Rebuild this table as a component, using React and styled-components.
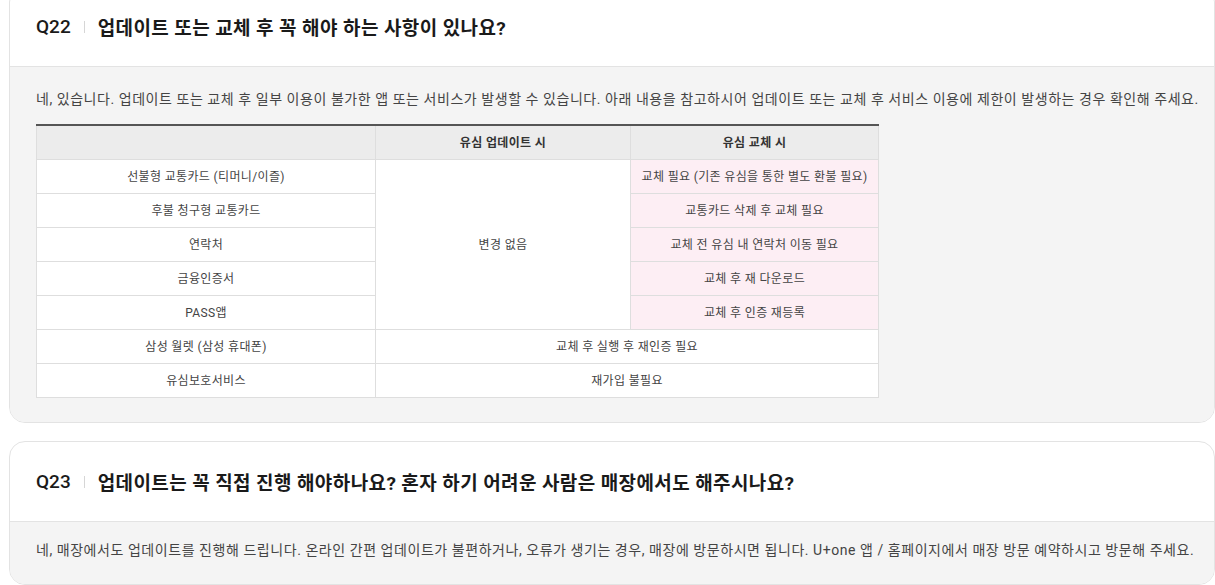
import styled, { createGlobalStyle } from 'styled-components'

const GlobalStyle = createGlobalStyle`
  html, body {
    margin: 0;
    padding: 0;
    background: #fff;
    overflow: hidden;
  }
  body {
    font-family: 'Roboto', 'Noto Sans CJK KR', sans-serif;
    color: #222;
  }
`

const List = styled.div`
  display: flex;
  flex-direction: column;
  gap: 18px;
  margin-top: -14px;
  padding-left: 9px;
`

const Card = styled.section`
  border: 1px solid #e3e3e3;
  border-radius: 16px;
  background: #fff;
  overflow: hidden;
`

const Question = styled.h3`
  display: flex;
  align-items: center;
  height: 79px;
  margin: 0;
  padding: 0 26px;
  font-size: 19px;
  font-weight: 700;
  color: #1a1a1a;
  letter-spacing: 0.4px;
`

const Num = styled.span`
  font-weight: 500;
  letter-spacing: 0;
`

const Bar = styled.span`
  width: 1px;
  height: 12px;
  margin: 0 13px;
  background: #d6d6d6;
`

const Answer = styled.div`
  padding: ${(p) => (p.$short ? '18px' : '22px')} 6px 24px 26px;
  border-top: 1px solid #e3e3e3;
  background: #f4f4f4;
  font-size: 14px;
  line-height: 20px;
  color: #444;
  letter-spacing: 0.55px;
  white-space: nowrap;
`

const Table = styled.table`
  width: 843px;
  margin-top: 15px;
  border-collapse: collapse;
  border-top: 2px solid #555;
  background: #fff;
  font-size: 12px;
  letter-spacing: 0.35px;
  color: #444;
  table-layout: fixed;
`

const Th = styled.th`
  height: 33px;
  padding: 0;
  border: 1px solid #dedede;
  border-top: 0;
  background: #ececec;
  font-weight: 700;
  color: #333;
`

const Td = styled.td`
  height: 33px;
  padding: 0;
  border: 1px solid #dedede;
  text-align: center;
  background: ${(p) => (p.$pink ? '#fdeef4' : '#fff')};
`

const rows = [
  ['선불형 교통카드 (티머니/이즐)', '교체 필요 (기존 유심을 통한 별도 환불 필요)'],
  ['후불 청구형 교통카드', '교통카드 삭제 후 교체 필요'],
  ['연락처', '교체 전 유심 내 연락처 이동 필요'],
  ['금융인증서', '교체 후 재 다운로드'],
  ['PASS앱', '교체 후 인증 재등록']
]

function App() {
  return (
    <>
      <GlobalStyle />
      <List>
        <Card>
          <Question>
            <Num>Q22</Num>
            <Bar />
            업데이트 또는 교체 후 꼭 해야 하는 사항이 있나요?
          </Question>
          <Answer>
            네, 있습니다. 업데이트 또는 교체 후 일부 이용이 불가한 앱 또는 서비스가 발생할 수 있습니다. 아래 내용을 참고하시어 업데이트 또는 교체 후 서비스 이용에 제한이 발생하는 경우 확인해 주세요.
            <Table>
              <colgroup>
                <col style={{ width: 339 }} />
                <col style={{ width: 255 }} />
                <col />
              </colgroup>
              <thead>
                <tr>
                  <Th />
                  <Th>유심 업데이트 시</Th>
                  <Th>유심 교체 시</Th>
                </tr>
              </thead>
              <tbody>
                {rows.map(([item, swap], i) => (
                  <tr key={item}>
                    <Td>{item}</Td>
                    {i === 0 && <Td rowSpan={5}>변경 없음</Td>}
                    <Td $pink>{swap}</Td>
                  </tr>
                ))}
                <tr>
                  <Td>삼성 월렛 (삼성 휴대폰)</Td>
                  <Td colSpan={2}>교체 후 실행 후 재인증 필요</Td>
                </tr>
                <tr>
                  <Td>유심보호서비스</Td>
                  <Td colSpan={2}>재가입 불필요</Td>
                </tr>
              </tbody>
            </Table>
          </Answer>
        </Card>
        <Card>
          <Question>
            <Num>Q23</Num>
            <Bar />
            업데이트는 꼭 직접 진행 해야하나요? 혼자 하기 어려운 사람은 매장에서도 해주시나요?
          </Question>
          <Answer $short>
            네, 매장에서도 업데이트를 진행해 드립니다. 온라인 간편 업데이트가 불편하거나, 오류가 생기는 경우, 매장에 방문하시면 됩니다. U+one 앱 / 홈페이지에서 매장 방문 예약하시고 방문해 주세요.
          </Answer>
        </Card>
      </List>
    </>
  )
}

export default App
